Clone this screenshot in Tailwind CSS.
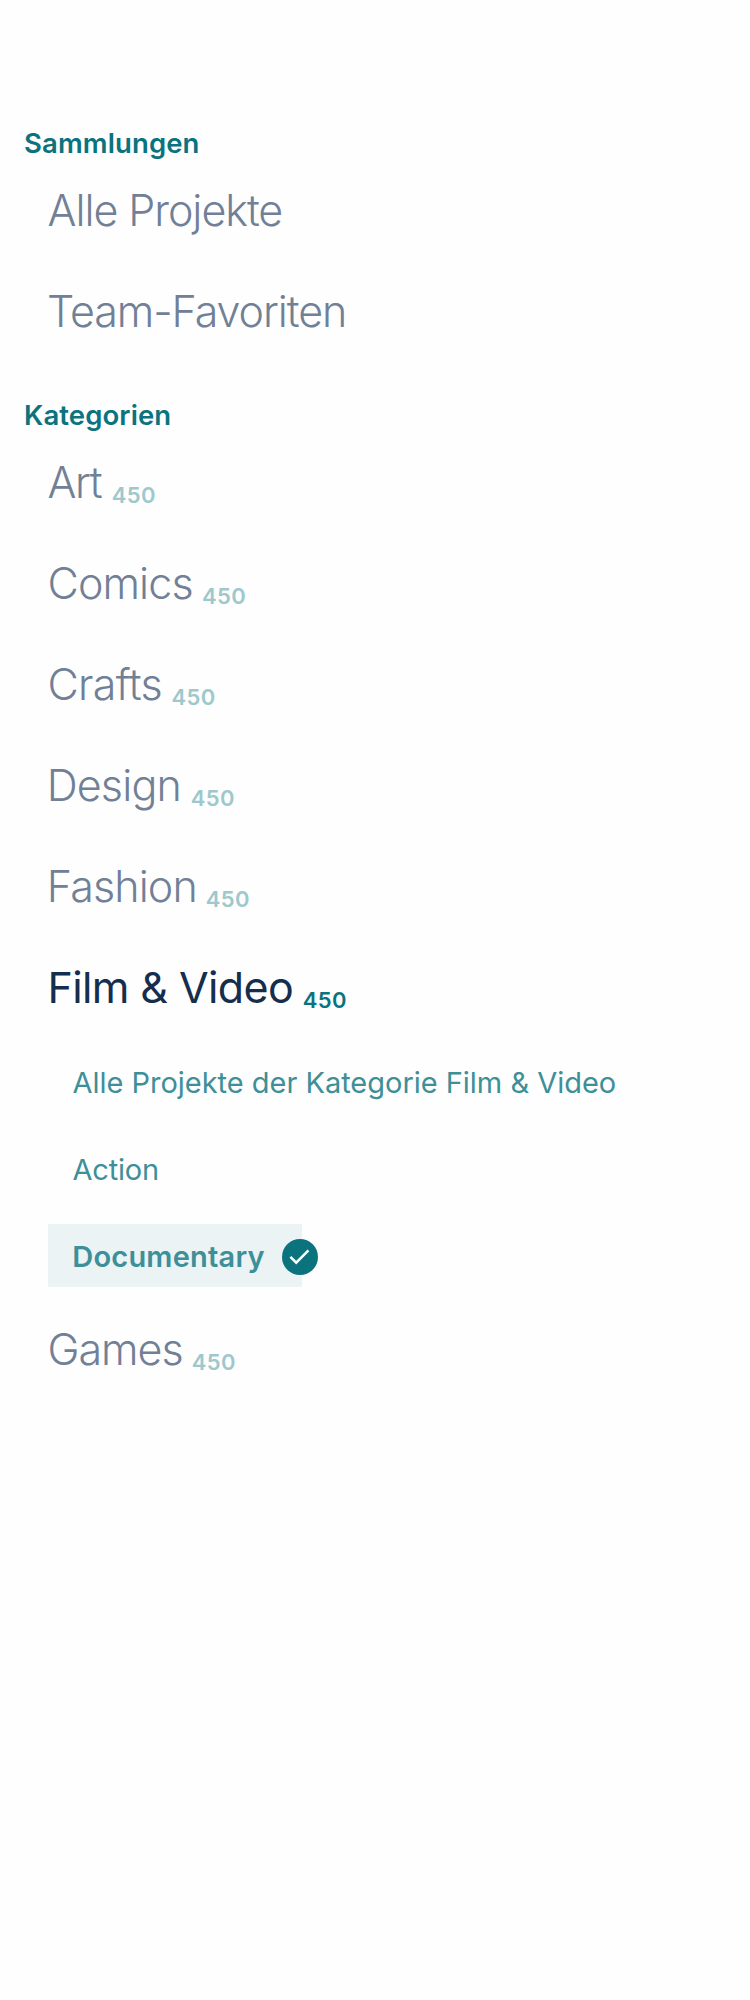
<!DOCTYPE html>
<html lang="de">
<head>
<meta charset="utf-8">
<title>Kategorien</title>
<script src="https://cdn.jsdelivr.net/npm/@tailwindcss/browser@4"></script>
</head>
<body class="bg-[#fefefe] font-['Inter',sans-serif] font-light text-[43px] text-[#718096]">
<nav class="flex min-h-[2000px] flex-col pt-[90px]">
  <section>
    <h2 class="h-[70px] pt-9 pl-6 text-[27.5px] leading-[34px] font-semibold tracking-[0.12px] text-[#0b737e]">Sammlungen</h2>
    <ul class="pl-[47.5px] leading-[101px]">
      <li class="flex h-[101px]"><a class="tracking-[-1.05px]">Alle Projekte</a></li>
      <li class="-ml-[0.5px] flex h-[101px]"><a class="tracking-[-1.08px]">Team-Favoriten</a></li>
    </ul>
  </section>
  <section>
    <h2 class="h-[70px] pt-9 pl-6 text-[27.5px] leading-[34px] font-semibold tracking-[0.1px] text-[#0b737e]">Kategorien</h2>
    <ul class="pl-[47.5px] leading-[101px]">
      <li class="flex h-[101px] items-baseline"><a class="tracking-[-1.4px]">Art</a><span class="relative top-[5px] ml-[10.6px] text-[22px] leading-none font-semibold tracking-[0.4px] text-[#9dc8cc]">450</span></li>
      <li class="flex h-[101px] items-baseline"><a class="tracking-[-0.9px]">Comics</a><span class="relative top-[5px] ml-[9.2px] text-[22px] leading-none font-semibold tracking-[0.4px] text-[#9dc8cc]">450</span></li>
      <li class="flex h-[101px] items-baseline"><a class="tracking-[-0.72px]">Crafts</a><span class="relative top-[5px] ml-[9.4px] text-[22px] leading-none font-semibold tracking-[0.4px] text-[#9dc8cc]">450</span></li>
      <li class="-ml-[0.8px] flex h-[101px] items-baseline"><a class="tracking-[-0.85px]">Design</a><span class="relative top-[5px] ml-[9.8px] text-[22px] leading-none font-semibold tracking-[0.4px] text-[#9dc8cc]">450</span></li>
      <li class="-ml-[0.8px] flex h-[101px] items-baseline"><a class="tracking-[-0.87px]">Fashion</a><span class="relative top-[5px] ml-[8.8px] text-[22px] leading-none font-semibold tracking-[0.4px] text-[#9dc8cc]">450</span></li>
      <li>
        <div class="flex h-[101px] items-baseline"><a class="font-normal tracking-[-0.62px] text-[#152e4d]">Film &amp; Video</a><span class="relative top-[5px] ml-[9.6px] text-[22px] leading-none font-semibold tracking-[0.4px] text-[#0b737e]">450</span></div>
        <ul class="my-3 ml-[0.5px] flex flex-col items-start gap-6 text-[29px] leading-[65px] font-normal text-[#3d8f98]">
          <li class="h-[63px] pl-[24.5px] tracking-[-0.02px]">Alle Projekte der Kategorie Film &amp; Video</li>
          <li class="h-[63px] pl-[24.5px] tracking-[-0.2px]">Action</li>
          <li class="relative h-[63px] w-[254px] bg-[#ebf3f5] pl-[24.3px] font-semibold tracking-[0.2px]">Documentary
            <svg class="absolute top-[14.5px] left-[234px] size-9" viewBox="0 0 36 36" fill="none"><circle cx="18" cy="18" r="18" fill="#0b737e"/><path d="M8.4 17.8l5.8 5.9L26.4 11.3" stroke="#fff" stroke-width="2.5"/></svg>
          </li>
        </ul>
      </li>
      <li class="flex h-[101px] items-baseline"><a class="tracking-[-1px]">Games</a><span class="relative top-[5px] ml-[9px] text-[22px] leading-none font-semibold tracking-[0.4px] text-[#9dc8cc]">450</span></li>
    </ul>
  </section>
</nav>
</body>
</html>
